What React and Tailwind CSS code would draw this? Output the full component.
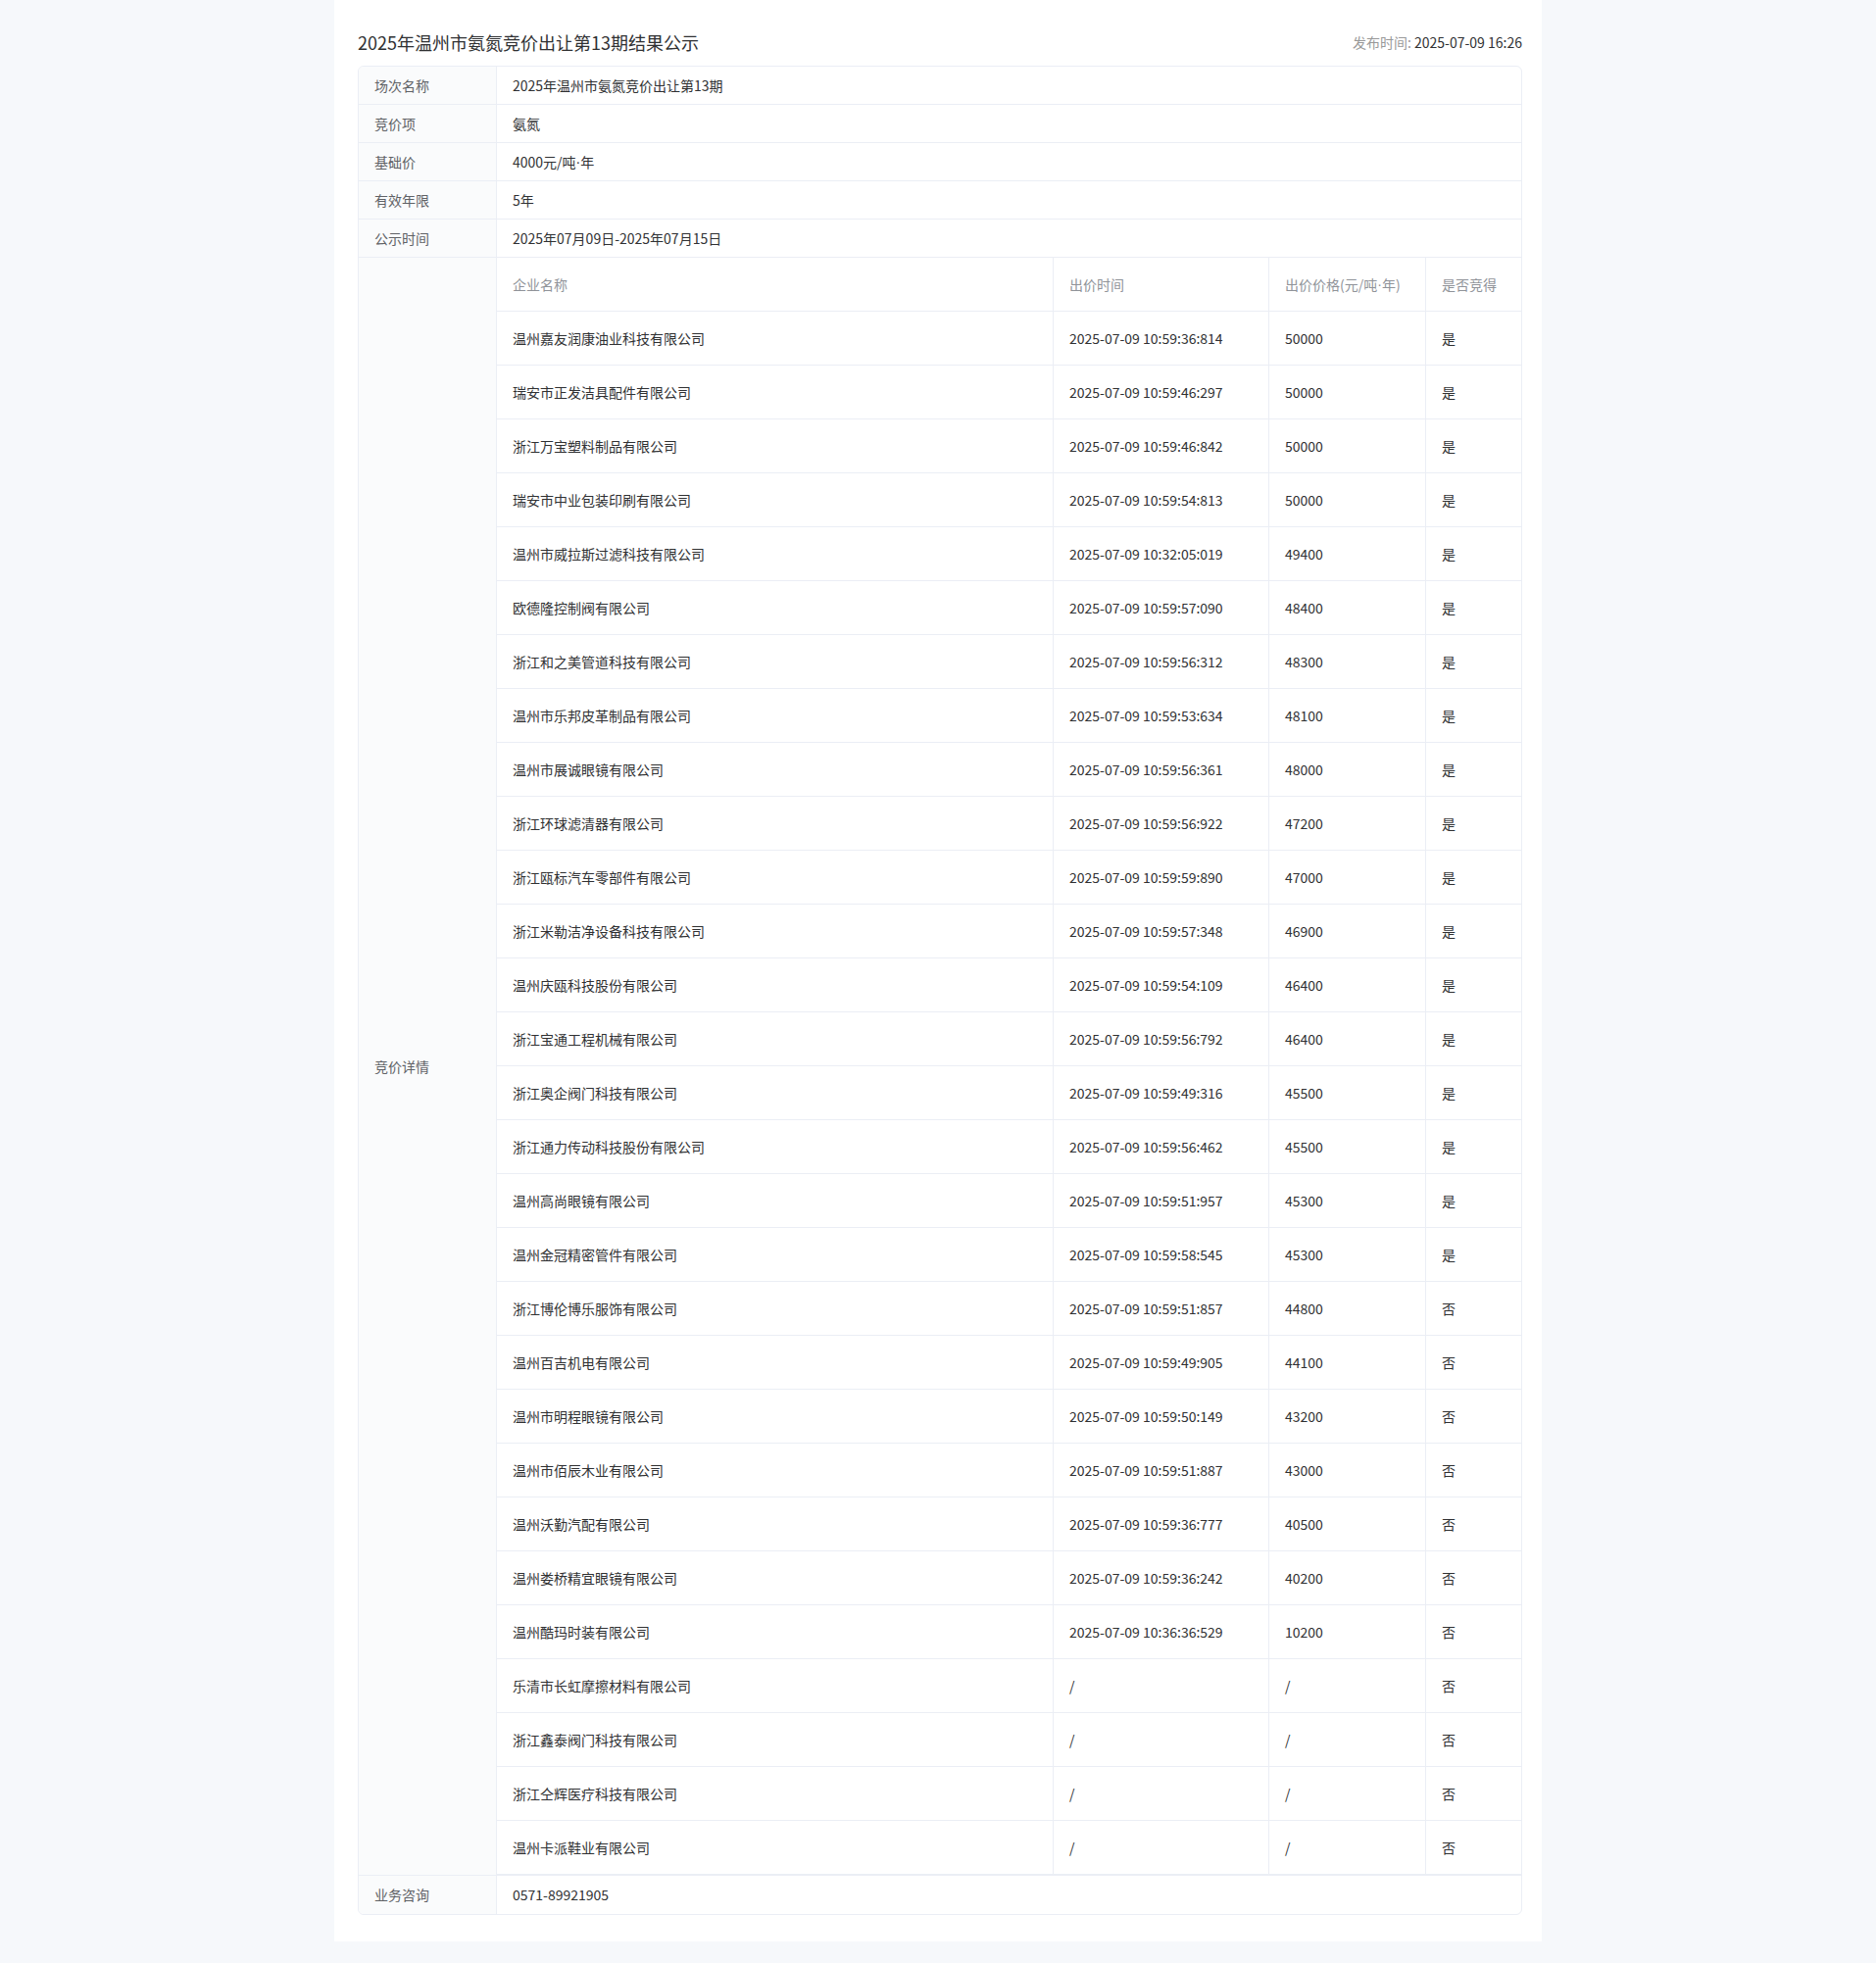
import React from "react";

const Dot = () => <span className="font-['Liberation_Sans',sans-serif]">·</span>;

const info = [
  { label: "场次名称", value: "2025年温州市氨氮竞价出让第13期" },
  { label: "竞价项", value: "氨氮" },
  { label: "基础价", value: <>4000元/吨<Dot />年</> },
  { label: "有效年限", value: "5年" },
  { label: "公示时间", value: "2025年07月09日-2025年07月15日" },
];

const bids = [
  ["温州嘉友润康油业科技有限公司", "2025-07-09 10:59:36:814", "50000", "是"],
  ["瑞安市正发洁具配件有限公司", "2025-07-09 10:59:46:297", "50000", "是"],
  ["浙江万宝塑料制品有限公司", "2025-07-09 10:59:46:842", "50000", "是"],
  ["瑞安市中业包装印刷有限公司", "2025-07-09 10:59:54:813", "50000", "是"],
  ["温州市威拉斯过滤科技有限公司", "2025-07-09 10:32:05:019", "49400", "是"],
  ["欧德隆控制阀有限公司", "2025-07-09 10:59:57:090", "48400", "是"],
  ["浙江和之美管道科技有限公司", "2025-07-09 10:59:56:312", "48300", "是"],
  ["温州市乐邦皮革制品有限公司", "2025-07-09 10:59:53:634", "48100", "是"],
  ["温州市展诚眼镜有限公司", "2025-07-09 10:59:56:361", "48000", "是"],
  ["浙江环球滤清器有限公司", "2025-07-09 10:59:56:922", "47200", "是"],
  ["浙江瓯标汽车零部件有限公司", "2025-07-09 10:59:59:890", "47000", "是"],
  ["浙江米勒洁净设备科技有限公司", "2025-07-09 10:59:57:348", "46900", "是"],
  ["温州庆瓯科技股份有限公司", "2025-07-09 10:59:54:109", "46400", "是"],
  ["浙江宝通工程机械有限公司", "2025-07-09 10:59:56:792", "46400", "是"],
  ["浙江奥企阀门科技有限公司", "2025-07-09 10:59:49:316", "45500", "是"],
  ["浙江通力传动科技股份有限公司", "2025-07-09 10:59:56:462", "45500", "是"],
  ["温州高尚眼镜有限公司", "2025-07-09 10:59:51:957", "45300", "是"],
  ["温州金冠精密管件有限公司", "2025-07-09 10:59:58:545", "45300", "是"],
  ["浙江博伦博乐服饰有限公司", "2025-07-09 10:59:51:857", "44800", "否"],
  ["温州百吉机电有限公司", "2025-07-09 10:59:49:905", "44100", "否"],
  ["温州市明程眼镜有限公司", "2025-07-09 10:59:50:149", "43200", "否"],
  ["温州市佰辰木业有限公司", "2025-07-09 10:59:51:887", "43000", "否"],
  ["温州沃勤汽配有限公司", "2025-07-09 10:59:36:777", "40500", "否"],
  ["温州娄桥精宜眼镜有限公司", "2025-07-09 10:59:36:242", "40200", "否"],
  ["温州酷玛时装有限公司", "2025-07-09 10:36:36:529", "10200", "否"],
  ["乐清市长虹摩擦材料有限公司", "/", "/", "否"],
  ["浙江鑫泰阀门科技有限公司", "/", "/", "否"],
  ["浙江仝辉医疗科技有限公司", "/", "/", "否"],
  ["温州卡派鞋业有限公司", "/", "/", "否"],
];

const cols = "grid grid-cols-[567px_220px_160px_1fr]";

const BidTable = () => (
  <div className="flex-1">
    <div className={`${cols} h-[55px] border-b border-[#ebeef5] text-[#909399]`}>
      <div className="flex items-center px-4">企业名称</div>
      <div className="flex items-center px-4 border-l border-[#ebeef5]">出价时间</div>
      <div className="flex items-center px-4 border-l border-[#ebeef5]">出价价格(元/吨<Dot />年)</div>
      <div className="flex items-center px-4 border-l border-[#ebeef5]">是否竞得</div>
    </div>
    {bids.map((row, i) => (
      <div key={i} className={`${cols} h-[55px] border-b border-[#ebeef5] text-[#303133]`}>
        <div className="flex items-center px-4">{row[0]}</div>
        <div className="flex items-center px-4 border-l border-[#ebeef5]">{row[1]}</div>
        <div className="flex items-center px-4 border-l border-[#ebeef5]">{row[2]}</div>
        <div className="flex items-center px-4 border-l border-[#ebeef5]">{row[3]}</div>
      </div>
    ))}
  </div>
);

const Row = ({ label, children, last }) => (
  <div className={`flex ${last ? "" : "border-b border-[#ebeef5]"}`}>
    <div className="w-[141px] shrink-0 flex items-center px-4 bg-[#fafbfc] border-r border-[#ebeef5] text-[#606266]">
      {label}
    </div>
    {children}
  </div>
);

export default function App() {
  return (
    <div
      className="min-h-screen bg-[#f6f8fb] pb-6"
      style={{ fontFamily: '"Noto Sans CJK SC", "Noto Sans", sans-serif' }}
    >
      <div className="mx-auto w-[1232px] bg-white pl-[24px] pr-[20px] pt-[29px] pb-[27px]">
        <div className="flex h-[28px] items-center justify-between">
          <h1 className="text-[18px] font-normal text-[#303133]">
            2025年温州市氨氮竞价出让第13期结果公示
          </h1>
          <div className="text-[14px]">
            <span className="text-[#999999]">发布时间:</span>{" "}
            <span className="text-[#303133]">2025-07-09 16:26</span>
          </div>
        </div>

        <div className="mt-[10px] overflow-hidden rounded-[6px] border border-[#ebeef5] text-[14px]">
          {info.map((item) => (
            <Row key={item.label} label={item.label}>
              <div className="flex h-[38px] flex-1 items-center px-4 text-[#303133]">{item.value}</div>
            </Row>
          ))}
          <Row label="竞价详情">
            <BidTable />
          </Row>
          <Row label="业务咨询" last>
            <div className="flex h-[39px] flex-1 items-center px-4 text-[#303133]">0571-89921905</div>
          </Row>
        </div>
      </div>
    </div>
  );
}
